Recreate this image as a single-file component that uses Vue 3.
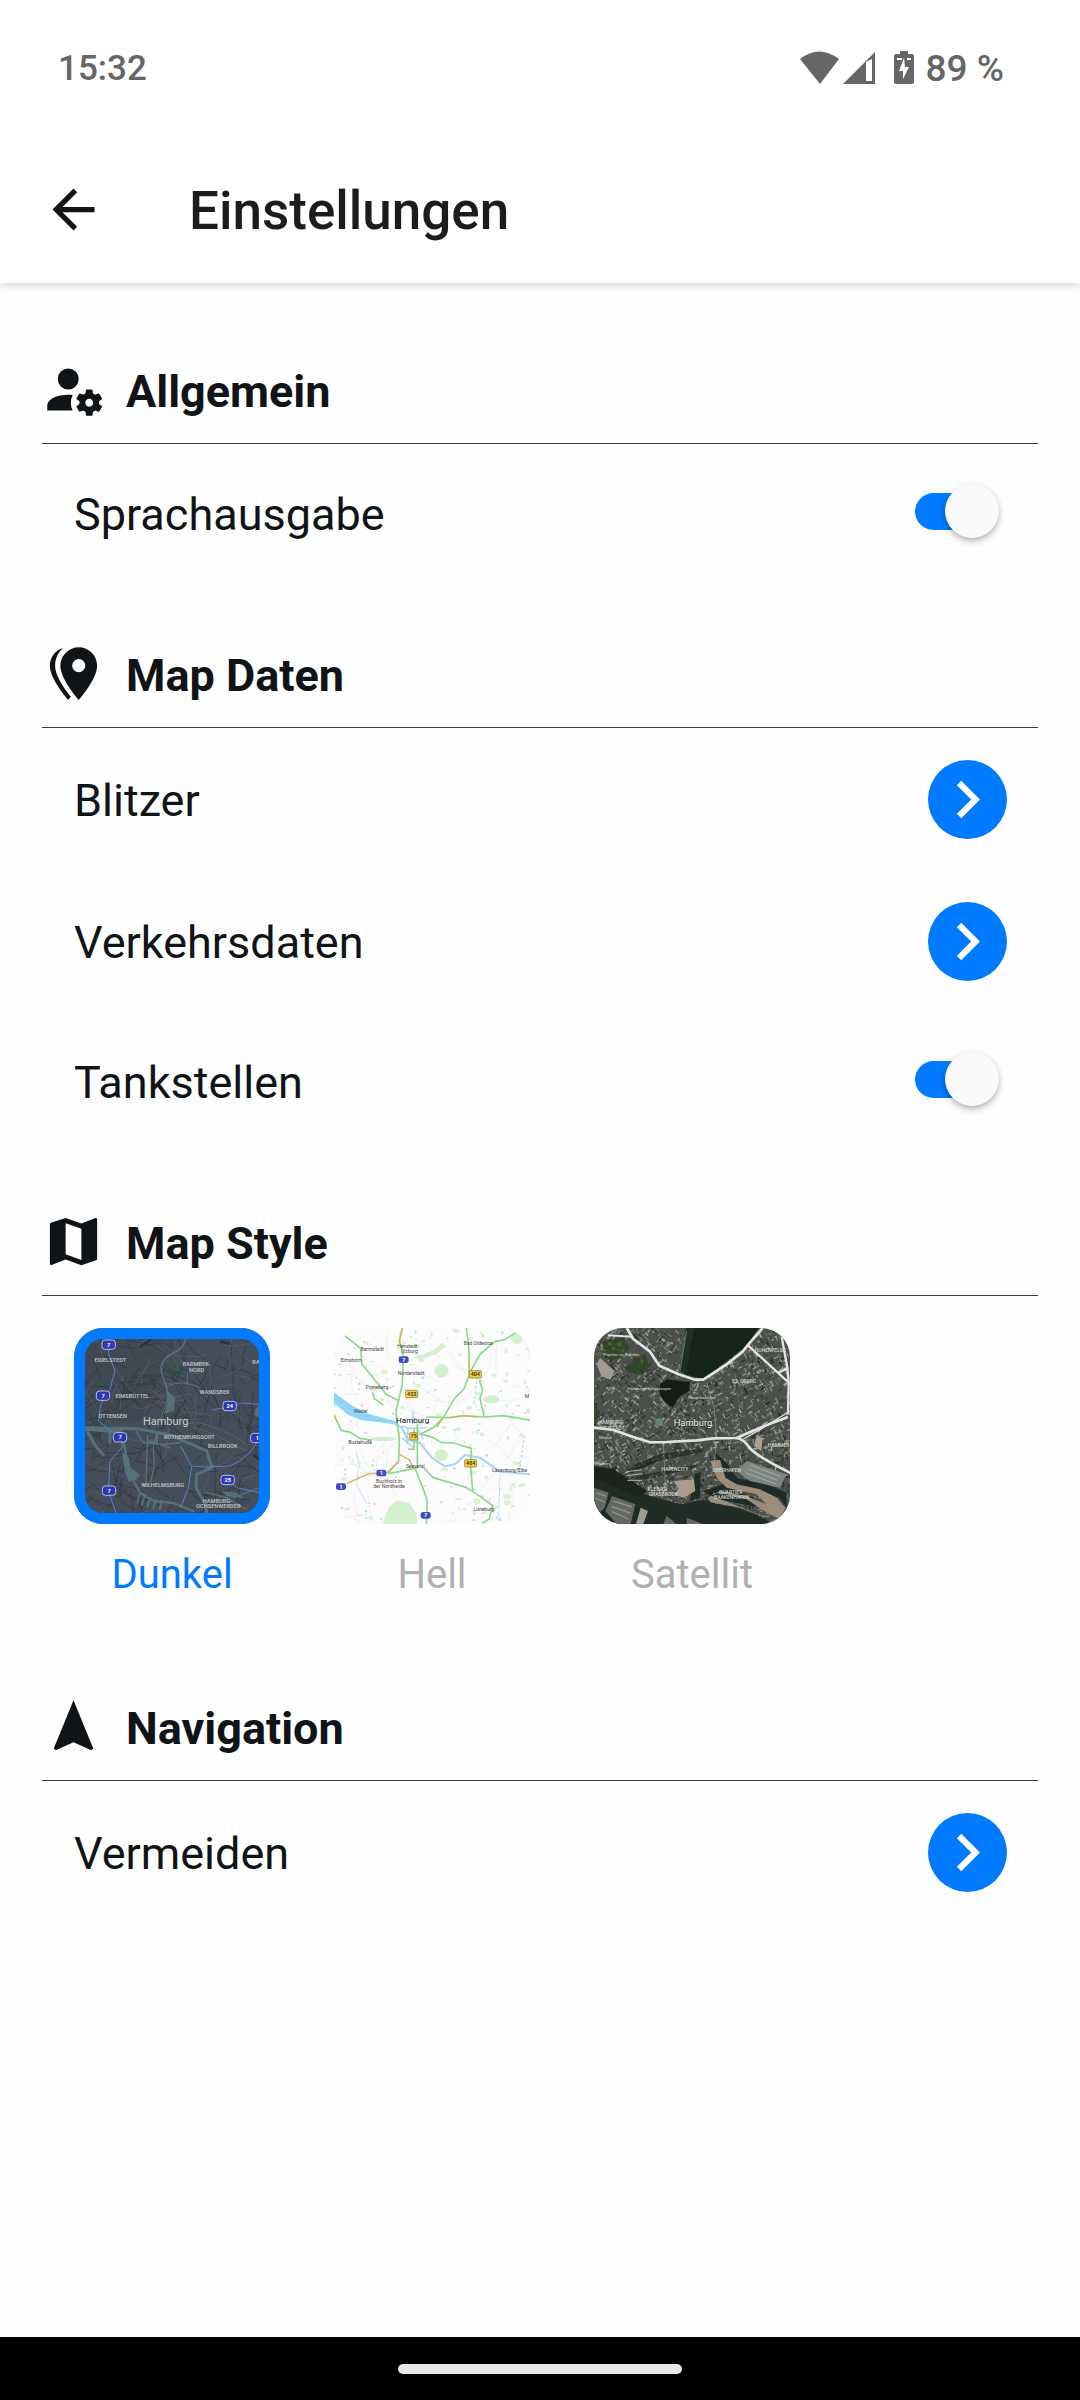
<script setup>
import { ref } from 'vue'

const voice = ref(true)
const fuel = ref(true)
const mapStyle = ref('dark')

const icons = {
  general:
    'M10 4A4 4 0 0 0 6 8A4 4 0 0 0 10 12A4 4 0 0 0 14 8A4 4 0 0 0 10 4M17 12C16.87 12 16.76 12.09 16.74 12.21L16.55 13.53C16.25 13.66 15.96 13.82 15.7 14L14.46 13.5C14.35 13.5 14.22 13.5 14.15 13.63L13.15 15.36C13.09 15.47 13.11 15.6 13.21 15.68L14.27 16.5C14.25 16.67 14.24 16.83 14.24 17C14.24 17.17 14.25 17.33 14.27 17.5L13.21 18.32C13.12 18.4 13.09 18.53 13.15 18.64L14.15 20.37C14.21 20.5 14.34 20.5 14.46 20.5L15.7 20C15.96 20.18 16.24 20.35 16.55 20.47L16.74 21.79C16.76 21.91 16.86 22 17 22H19C19.11 22 19.22 21.91 19.24 21.79L19.43 20.47C19.73 20.34 20 20.18 20.27 20L21.5 20.5C21.63 20.5 21.76 20.5 21.83 20.37L22.83 18.64C22.89 18.53 22.86 18.4 22.77 18.32L21.7 17.5C21.72 17.33 21.74 17.17 21.74 17C21.74 16.83 21.73 16.67 21.7 16.5L22.76 15.68C22.85 15.6 22.88 15.47 22.82 15.36L21.82 13.63C21.76 13.5 21.63 13.5 21.5 13.5L20.27 14C20 13.82 19.73 13.65 19.42 13.53L19.23 12.21C19.22 12.09 19.11 12 19 12H17M10 14C5.58 14 2 15.79 2 18V20H11.68A7 7 0 0 1 11 17A7 7 0 0 1 11.64 14.09C11.11 14.03 10.56 14 10 14M18 15.5C18.83 15.5 19.5 16.17 19.5 17C19.5 17.83 18.83 18.5 18 18.5C17.16 18.5 16.5 17.83 16.5 17C16.5 16.17 17.17 15.5 18 15.5Z',
  data: 'M14,11.5A2.5,2.5 0 0,0 16.5,9A2.5,2.5 0 0,0 14,6.5A2.5,2.5 0 0,0 11.5,9A2.5,2.5 0 0,0 14,11.5M14,2C17.86,2 21,5.13 21,9C21,14.25 14,22 14,22C14,22 7,14.25 7,9A7,7 0 0,1 14,2M5,9C5,13.5 10.08,19.66 11,20.81L10,22C10,22 3,14.25 3,9C3,5.83 5.11,3.15 8,2.29C6.16,3.94 5,6.33 5,9Z',
  style:
    'M15,19L9,16.89V5L15,7.11M20.5,3C20.44,3 20.39,3 20.34,3L15,5.1L9,3L3.36,4.9C3.15,4.97 3,5.15 3,5.38V20.5A0.5,0.5 0 0,0 3.5,21C3.55,21 3.61,21 3.66,20.97L9,18.9L15,21L20.64,19.1C20.85,19 21,18.85 21,18.62V3.5A0.5,0.5 0 0,0 20.5,3Z',
  navigation: 'M12,2L4.5,20.29L5.21,21L12,18L18.79,21L19.5,20.29L12,2Z',
}
const chevron = 'M8.59,16.58L13.17,12L8.59,7.41L10,6L16,12L10,18L8.59,16.58Z'

// Repeatable random numbers, so the map texture is the same on every load
function generator(seed) {
  let s = seed
  return () => {
    s = (s * 16807) % 2147483647
    return s / 2147483647
  }
}

// Short broken lines that stand for side streets
function streets(seed, count) {
  const rnd = generator(seed)
  let d = ''
  for (let i = 0; i < count; i++) {
    let x = 42 + rnd() * 588
    let y = 51 + rnd() * 588
    let a = rnd() * Math.PI
    d += `M${x.toFixed(0)} ${y.toFixed(0)}`
    for (let j = 0; j < 4; j++) {
      a += (rnd() - 0.5) * 0.8
      x += Math.cos(a) * 24
      y += Math.sin(a) * 24
      d += `L${x.toFixed(0)} ${y.toFixed(0)}`
    }
  }
  return d
}

function blobs(seed, count, size) {
  const rnd = generator(seed)
  return Array.from({ length: count }, () => ({
    x: Math.round(42 + rnd() * 588),
    y: Math.round(51 + rnd() * 588),
    rx: Math.round(2 + rnd() * size),
    ry: Math.round(2 + rnd() * size * 0.7),
  }))
}

// Rows of roofs, turned with the street grid of their quarter
function roofs(seed, count) {
  const rnd = generator(seed)
  const tones = ['#8b8d88', '#7a7d76', '#a8a9a3', '#262d29', '#30362f', '#656a63', '#8d8f88']
  return Array.from({ length: count }, () => {
    const x = Math.round(42 + rnd() * 588)
    const y = Math.round(51 + rnd() * 588)
    const turn = (x > 380 ? -28 : -48) + (y > 380 ? 20 : 0) + (rnd() > 0.5 ? 90 : 0)
    return {
      x,
      y,
      w: Math.round(4 + rnd() * 13),
      h: Math.round(2 + rnd() * 3),
      turn,
      fill: tones[Math.floor(rnd() * tones.length)],
    }
  })
}

const darkStreets = streets(11, 190)
const darkLanes = streets(29, 50)
const lightLanes = streets(53, 60)
const lightWoods = blobs(7, 90, 9)
const lightTowns = blobs(17, 60, 4)
const lightPonds = blobs(41, 55, 3)
const cityRoofs = roofs(91, 2600)

const darkShields = [
  { x: 146, y: 101, n: '7' },
  { x: 129, y: 254, n: '7' },
  { x: 180, y: 379, n: '7' },
  { x: 147, y: 539, n: '7' },
  { x: 509, y: 285, n: '24' },
  { x: 592, y: 381, n: '1' },
  { x: 503, y: 507, n: '25' },
]
const darkNames = [
  { x: 151, y: 154, t: 'EIDELSTEDT' },
  { x: 410, y: 165, t: 'BARMBEK-' },
  { x: 410, y: 183, t: 'NORD' },
  { x: 588, y: 158, t: 'RA' },
  { x: 464, y: 250, t: 'WANDSBEK' },
  { x: 217, y: 262, t: 'EIMSBÜTTEL' },
  { x: 158, y: 320, t: 'OTTENSEN' },
  { x: 388, y: 384, t: 'ROTHENBURGSORT' },
  { x: 488, y: 410, t: 'BILLBROOK' },
  { x: 308, y: 527, t: 'WILHELMSBURG' },
  { x: 472, y: 575, t: 'HAMBURG-' },
  { x: 475, y: 592, t: 'OCHSENWERDER' },
]
const lightShields = [
  { x: 251, y: 146, n: '7' },
  { x: 184, y: 486, n: '1' },
  { x: 63, y: 527, n: '1' },
  { x: 317, y: 613, n: '7' },
]
const lightPlates = [
  { x: 466, y: 190, n: '404' },
  { x: 275, y: 249, n: '433' },
  { x: 281, y: 376, n: '75' },
  { x: 452, y: 457, n: '404' },
]
const lightNames = [
  { x: 157, y: 121, t: 'Barmstedt' },
  { x: 264, y: 110, t: 'Henstedt-' },
  { x: 268, y: 125, t: 'Ulzburg' },
  { x: 475, y: 103, t: 'Bad Oldesloe' },
  { x: 93, y: 153, t: 'Elmshorn' },
  { x: 273, y: 192, t: 'Norderstedt' },
  { x: 171, y: 234, t: 'Pinneberg' },
  { x: 122, y: 305, t: 'Wedel' },
  { x: 120, y: 398, t: 'Buxtehude' },
  { x: 286, y: 470, t: 'Seevetal' },
  { x: 207, y: 516, t: 'Buchholz in' },
  { x: 207, y: 532, t: 'der Nordheide' },
  { x: 492, y: 599, t: 'Lüneburg' },
  { x: 569, y: 484, t: 'Lauenburg/Elbe' },
  { x: 621, y: 262, t: 'M' },
]
const satelliteNames = [
  { x: 571, y: 123, t: 'HOHENFELDE' },
  { x: 492, y: 215, t: 'ST. GEORG' },
  { x: 94, y: 339, t: 'HAMBURG-' },
  { x: 96, y: 356, t: 'NEUSTADT' },
  { x: 596, y: 407, t: 'HAMMER' },
  { x: 285, y: 481, t: 'HAFENCITY' },
  { x: 440, y: 483, t: 'OBERHAFEN' },
  { x: 232, y: 539, t: 'KLEINER' },
  { x: 250, y: 555, t: 'GRASBROOK' },
  { x: 452, y: 549, t: 'QUARTIER' },
  { x: 455, y: 564, t: 'BAAKENHAFEN' },
]
const satellitePlaces = [
  { x: 124, y: 134, t: 'Planten un Blomen' },
  { x: 208, y: 237, t: 'Hamburger Staatsoper' },
  { x: 366, y: 263, t: 'Hauptbahnhof' },
  { x: 76, y: 383, t: 'Michel' },
  { x: 66, y: 463, t: 'Hafen' },
]
</script>

<template>
  <div class="screen">
    <header class="top">
      <div class="status">
        <span>15:32</span>
        <div class="indicators">
          <svg class="signals" viewBox="0 0 116 36" aria-hidden="true">
            <path d="M0 9Q19 -6 39 9L20 34Z" />
            <path fill-rule="evenodd" d="M75 2V34H43ZM66 12V31H72V9Z" />
            <path
              fill-rule="evenodd"
              d="M100 1h8v3h4q2 0 2 2V32q0 2-2 2H96q-2 0-2-2V6q0-2 2-2h4ZM97 8v2h5V8ZM107 8v2h4V8ZM104 8L99 21H103V29L109 17H105Z"
            />
          </svg>
          <span class="level">89 %</span>
        </div>
      </div>
      <div class="appbar">
        <button class="back" type="button" aria-label="Zurück">
          <svg class="icon" viewBox="0 0 24 24" aria-hidden="true">
            <path d="M20 11H7.83L13.42 5.41L12 4L4 12L12 20L13.41 18.59L7.83 13H20Z" />
          </svg>
        </button>
        <h1>Einstellungen</h1>
      </div>
    </header>

    <main>
      <section>
        <h2>
          <svg class="icon" viewBox="0 0 24 24" aria-hidden="true"><path :d="icons.general" /></svg>
          Allgemein
        </h2>
        <div class="row row-switch">
          <label for="voice">Sprachausgabe</label>
          <input id="voice" v-model="voice" class="switch" type="checkbox" role="switch" />
        </div>
      </section>

      <section>
        <h2>
          <svg class="icon" viewBox="0 0 24 24" aria-hidden="true"><path :d="icons.data" /></svg>
          Map Daten
        </h2>
        <div v-for="name in ['Blitzer', 'Verkehrsdaten']" :key="name" class="row">
          <span>{{ name }}</span>
          <button class="open" type="button" :aria-label="name">
            <svg viewBox="0 0 24 24" aria-hidden="true"><path :d="chevron" /></svg>
          </button>
        </div>
        <div class="row row-switch">
          <label for="fuel">Tankstellen</label>
          <input id="fuel" v-model="fuel" class="switch" type="checkbox" role="switch" />
        </div>
      </section>

      <section>
        <h2>
          <svg class="icon" viewBox="0 0 24 24" aria-hidden="true"><path :d="icons.style" /></svg>
          Map Style
        </h2>
        <div class="styles">
          <label class="style">
            <input v-model="mapStyle" type="radio" name="map-style" value="dark" />
            <span class="thumb">
              <svg viewBox="42 51 588 588" aria-hidden="true">
                <rect x="42" y="51" width="588" height="588" fill="#444d5a" />
                <path d="M75 80H340L300 180L240 330H75Z" fill="#3f4853" />
                <ellipse cx="350" cy="178" rx="27" ry="14" fill="#2f4f47" />
                <ellipse cx="122" cy="220" rx="20" ry="12" fill="#34504a" />
                <path :d="darkStreets" fill="none" stroke="#2f3640" stroke-width="2" />
                <path :d="darkLanes" fill="none" stroke="#59636f" stroke-width="2" />
                <g fill="#56717a">
                  <path d="M318 235L345 262L342 300L312 308L322 280Z" />
                  <path d="M588 290L600 284V320L584 312Z" />
                  <path d="M72 345L180 350L190 360L160 366L90 360L72 362Z" />
                  <path d="M186 420L206 440L212 470L240 492L228 506L206 512L194 480Z" />
                  <path d="M484 540L530 546L550 562L500 556Z" />
                </g>
                <g fill="none" stroke="#56717a" stroke-linecap="round" stroke-linejoin="round">
                  <path d="M75 352H170L240 354L330 372L400 402L440 420L456 470L410 490L408 530L436 580L440 606" stroke-width="9" />
                  <path d="M84 365L110 410L130 430M150 362L150 395" stroke-width="9" />
                  <path d="M190 390L200 440L215 500L240 545L280 570L340 576L400 600" stroke-width="7" />
                  <path d="M230 362L250 395L310 400L360 395M290 362L285 395L330 410M262 370V392H292V370" stroke-width="5" />
                  <path d="M262 400L258 520M280 400L282 470L270 520" stroke-width="4" />
                  <path d="M240 545L232 575M255 552L246 580M270 560L262 586M288 566L280 592M304 570L300 594" stroke-width="6" />
                  <path d="M376 84C370 130 320 120 305 160C296 190 320 210 322 245" stroke-width="5" />
                  <path d="M320 270L300 330M382 186V220M320 225Q370 205 420 230" stroke-width="3" />
                  <path d="M384 338Q430 330 460 350Q500 358 560 400M400 350Q450 360 500 390L560 420" stroke-width="2" />
                  <path d="M440 545L500 560L560 596M520 560L598 530" stroke-width="4" />
                </g>
                <path d="M240 108L274 84M480 92L510 98M580 432L598 444" stroke="#2d343e" stroke-width="8" fill="none" />
                <g fill="none" stroke="#5f7fc4" stroke-width="3">
                  <path d="M146 84V130L165 180L150 235L122 280L116 330L150 358L184 380L186 410L150 450L145 540L168 606" />
                  <path d="M455 296L500 290L545 276L598 280" />
                  <path d="M598 380Q570 440 510 465L440 468L395 466L362 405M395 466L385 530L362 590" />
                  <path d="M500 500L530 530L598 545" />
                </g>
                <g v-for="(s, i) in darkShields" :key="i">
                  <rect :x="s.x - 20" :y="s.y - 14" width="40" height="28" rx="9" fill="#2c37b4" stroke="#b9c0dc" stroke-width="3" />
                  <text class="shield" :x="s.x" :y="s.y + 6">{{ s.n }}</text>
                </g>
                <g fill="#c3c9cf" class="caps">
                  <text v-for="n in darkNames" :key="n.t" :x="n.x" :y="n.y">{{ n.t }}</text>
                </g>
                <text class="city" x="317" y="341" fill="#c9ced4">Hamburg</text>
              </svg>
            </span>
            <span class="caption">Dunkel</span>
          </label>

          <label class="style">
            <input v-model="mapStyle" type="radio" name="map-style" value="light" />
            <span class="thumb">
              <svg viewBox="42 51 588 588" aria-hidden="true">
                <rect x="42" y="51" width="588" height="588" fill="#fcfcfc" />
                <path :d="lightLanes" fill="none" stroke="#ececf0" stroke-width="2" />
                <g fill="#d5f0cf">
                  <path d="M188 639L205 590L230 568L268 575L290 610L292 639Z" />
                  <ellipse cx="364" cy="180" rx="22" ry="20" />
                  <ellipse cx="514" cy="265" rx="24" ry="12" />
                  <ellipse cx="590" cy="84" rx="18" ry="16" />
                  <ellipse cx="190" cy="384" rx="38" ry="7" />
                  <ellipse cx="364" cy="432" rx="20" ry="18" />
                  <path d="M280 140L340 118L366 96L380 104L350 128L300 146Z" />
                </g>
                <g fill="#d9f2d3">
                  <ellipse v-for="(b, i) in lightWoods" :key="i" :cx="b.x" :cy="b.y" :rx="b.rx" :ry="b.ry" />
                </g>
                <g fill="#e6dccb">
                  <ellipse v-for="(b, i) in lightTowns" :key="i" :cx="b.x" :cy="b.y" :rx="b.rx" :ry="b.ry" />
                </g>
                <g fill="#b5e3f5">
                  <ellipse v-for="(b, i) in lightPonds" :key="i" :cx="b.x" :cy="b.y" :rx="b.rx" :ry="b.ry" />
                </g>
                <path d="M42 244L90 280L135 306L225 330L238 342L180 334L125 328L85 312L42 276Z" fill="#8fd5f6" />
                <g fill="none" stroke="#a9d4f7" stroke-linejoin="round">
                  <path d="M215 332L245 350L262 384L300 396L335 440L375 466L405 460L435 432L480 440L540 482L632 490" stroke-width="6" />
                  <path d="M245 345L270 352L320 350M250 365L290 372M246 380L280 410M264 350L262 400M280 300L278 340M290 350L310 385" stroke-width="4" />
                  <path d="M614 372L604 440L598 490M470 210L462 280L480 300M613 210L625 240" stroke-width="3" stroke-dasharray="9 6" />
                  <path d="M540 490L536 620M108 420L118 460L110 520L140 580" stroke-width="2" />
                </g>
                <g fill="none" stroke="#8bd98a" stroke-width="5" stroke-linejoin="round">
                  <path d="M75 75L122 112L126 160L182 228L198 250L234 268" />
                  <path d="M247 51L238 90L250 130L247 220L228 300L232 340L238 380L236 450L204 486" />
                  <path d="M158 244L162 262L190 282" />
                  <path d="M439 51L446 100L448 190L432 234L404 262L370 320L340 350L300 370" />
                  <path d="M588 64L555 86L524 92L480 130L452 180" />
                  <path d="M478 206L488 236L480 262L492 316" />
                  <path d="M320 318L390 320L430 314L492 318L550 314L632 328" />
                  <path d="M42 312L64 358L92 364L120 382L156 388" />
                  <path d="M300 368L340 380L362 394L400 396L454 412L452 470L458 540" />
                  <path d="M292 340L292 470L238 482L204 488" />
                  <path d="M286 474L312 540L322 570L319 639" />
                  <path d="M310 470L340 500L440 530L480 556L518 584L508 624L486 637" />
                  <path d="M282 352V415L264 414" />
                </g>
                <g fill="none" stroke="#d3b45c" stroke-width="4">
                  <path d="M247 51L238 90L244 106M388 320L430 314L470 318M448 150L448 190M42 312L52 334" />
                  <path d="M80 518L146 488L200 486L236 452M350 348L368 322M238 430L268 446L282 474" />
                </g>
                <g v-for="s in lightShields" :key="`${s.x}-${s.y}`">
                  <rect :x="s.x - 15" :y="s.y - 10" width="30" height="20" rx="7" fill="#3c4bc8" />
                  <text class="shield" :x="s.x" :y="s.y + 6">{{ s.n }}</text>
                </g>
                <g v-for="s in lightPlates" :key="`${s.x}-${s.y}`">
                  <rect :x="s.x - (s.n.length * 6)" :y="s.y - 11" :width="s.n.length * 12" height="22" rx="3" fill="#f2d44a" stroke="#80661c" stroke-width="2" />
                  <text class="plate" :x="s.x" :y="s.y + 6">{{ s.n }}</text>
                </g>
                <g fill="#44464c" class="town">
                  <text v-for="n in lightNames" :key="n.t" :x="n.x" :y="n.y">{{ n.t }}</text>
                </g>
                <text class="city city-small" x="278" y="336" fill="#15171a">Hamburg</text>
              </svg>
            </span>
            <span class="caption">Hell</span>
          </label>

          <label class="style">
            <input v-model="mapStyle" type="radio" name="map-style" value="satellite" />
            <span class="thumb">
              <svg viewBox="42 51 588 588" aria-hidden="true">
                <rect x="42" y="51" width="588" height="588" fill="#4b504a" />
                <g>
                  <rect
                    v-for="(r, i) in cityRoofs"
                    :key="i"
                    :x="r.x"
                    :y="r.y"
                    :width="r.w"
                    :height="r.h"
                    :fill="r.fill"
                    :transform="`rotate(${r.turn} ${r.x} ${r.y})`"
                  />
                </g>
                <g fill="#2b4322" opacity="0.8">
                  <path d="M70 90L130 80L150 110L130 135L90 150L68 120Z" />
                  <path d="M160 150L195 130L210 165L190 190L150 185L130 170Z" />
                  <path d="M42 270L60 300L48 340L42 340Z" />
                </g>
                <g fill="#42662b">
                  <circle cx="90" cy="98" r="6" /><circle cx="118" cy="100" r="7" /><circle cx="128" cy="120" r="5" />
                  <circle cx="100" cy="112" r="5" /><circle cx="186" cy="150" r="5" /><circle cx="76" cy="118" r="4" />
                </g>
                <path d="M60 140L104 180L92 206L64 196L50 160Z" fill="#a29c90" />
                <path d="M318 51H536L500 105L440 150L370 203L320 192L298 178L312 110Z" fill="#14241a" />
                <path d="M318 51H345L330 110L320 192L298 178L312 110Z" fill="#1e3120" />
                <path d="M240 218L262 205L330 214L328 240L300 256L278 290L250 270L238 246Z" fill="#151d18" />
                <path d="M240 258L268 296" stroke="#7f837d" stroke-width="4" />
                <circle cx="238" cy="334" r="12" fill="#66807a" />
                <g fill="#1f2c25">
                  <path d="M42 480L90 500L160 540L230 560L300 580L370 566L400 576L480 592L560 625L570 639H42Z" />
                  <path d="M345 490L362 482L360 560L330 570Z" />
                  <path d="M400 420L440 455L470 500L560 520L620 545V590L600 560L540 540L450 520L424 480Z" />
                  <path d="M370 540L430 520L520 560L560 590L500 582L400 562Z" />
                </g>
                <g fill="#646861">
                  <path d="M42 530L86 545L74 590L42 622Z" />
                  <path d="M96 555L166 580L152 639L110 639L76 600Z" />
                  <path d="M260 615L290 639H250ZM320 620L370 639H320Z" />
                </g>
                <path d="M100 570L156 588M94 586L150 606M96 602L146 624M50 545L78 556M46 562L76 574" stroke="#8f928b" stroke-width="4" />
                <path d="M182 590L204 600L190 639H168Z" fill="#a19c92" />
                <path d="M280 510L342 505L346 540L310 560L284 552L296 530Z" fill="#ab9d8e" />
                <g fill="#9c8d7b">
                  <path d="M390 450L420 446L436 500L470 520L540 535L590 560L616 590L600 625L560 605L500 565L440 550L400 545L396 555L560 620L480 590L392 574L384 560L420 540L500 556L560 580L530 550L440 530L410 500Z" />
                </g>
                <path d="M500 450L620 490L600 530L510 510L470 480Z" fill="#7d8583" />
                <path d="M512 462L600 496M505 474L592 508M498 486L590 520" stroke="#a6adac" stroke-width="3" />
                <path d="M530 372L548 382L544 420L522 406Z" fill="#aaa08f" />
                <g fill="#10160f" opacity="0.5">
                  <path d="M140 470L240 430L372 410L366 424L250 446L150 486Z" />
                  <path d="M150 500L250 480L345 462V472L250 492L160 512Z" />
                </g>
                <path d="M42 466L100 474L150 506L200 540L180 560L42 500Z" fill="#1a251e" />
                <g fill="none" stroke="#b3b5b0" stroke-width="3">
                  <path d="M320 60L300 180M380 215L402 290L410 380M250 395L256 520M410 390L400 470" opacity="0.5" />
                  <path d="M140 482L186 476M140 494L184 488M142 508L186 508" />
                </g>
                <g fill="none" stroke="#e4e4e2" stroke-linejoin="round">
                  <path d="M140 51L160 84L210 122L238 164L296 190L345 206H370L440 160L488 122L505 100L548 51" stroke-width="8" />
                  <path d="M84 73L156 77" stroke-width="6" />
                  <path d="M505 104L632 220M605 78L622 170L626 214L624 310M622 172L596 184" stroke-width="7" />
                  <path d="M42 350L100 357L160 378L210 394L260 393L350 388L400 382L470 381L540 350L624 318" stroke-width="8" />
                  <path d="M490 384L540 356L620 306" stroke-width="4" />
                  <path d="M470 381Q492 384 508 410Q530 436 632 486" stroke-width="8" />
                </g>
                <g fill="#d6d7d3" class="caps caps-small">
                  <text v-for="n in satelliteNames" :key="n.t" :x="n.x" :y="n.y">{{ n.t }}</text>
                </g>
                <g fill="#d6d7d3" class="place">
                  <text v-for="n in satellitePlaces" :key="n.t" :x="n.x" :y="n.y">{{ n.t }}</text>
                </g>
                <text class="city city-medium" x="339" y="346" fill="#ffffff" stroke="#20241f" stroke-width="3" paint-order="stroke">Hamburg</text>
              </svg>
            </span>
            <span class="caption">Satellit</span>
          </label>
        </div>
      </section>

      <section>
        <h2>
          <svg class="icon" viewBox="0 0 24 24" aria-hidden="true"><path :d="icons.navigation" /></svg>
          Navigation
        </h2>
        <div class="row">
          <span>Vermeiden</span>
          <button class="open" type="button" aria-label="Vermeiden">
            <svg viewBox="0 0 24 24" aria-hidden="true"><path :d="chevron" /></svg>
          </button>
        </div>
      </section>
    </main>

    <footer class="gesture"><span></span></footer>
  </div>
</template>

<style>
body {
  background: #fefefe;
}
</style>

<style scoped>
.screen {
  display: flex;
  flex-direction: column;
  min-height: 100vh;
  font-family: Roboto, 'Liberation Sans', sans-serif;
  color: #111417;
}
.screen * {
  box-sizing: border-box;
}
svg {
  display: block;
}
h1,
h2 {
  margin: 0;
}
button {
  padding: 0;
  border: 0;
  background: none;
  color: inherit;
}

.top {
  background: #fff;
  box-shadow: 0 1px 10px rgba(0, 0, 0, 0.22);
}
.status {
  display: flex;
  align-items: center;
  justify-content: space-between;
  height: 136px;
  padding: 0 76px 0 58px;
  color: #666;
  font-size: 35px;
  font-weight: 500;
}
.indicators {
  display: flex;
  align-items: center;
  gap: 10px;
}
.level {
  font-size: 37px;
}
.signals {
  width: 116px;
  height: 36px;
  fill: currentColor;
}
.appbar {
  display: flex;
  align-items: center;
  gap: 84px;
  height: 147px;
  padding: 0 42px;
}
.appbar h1 {
  padding-top: 3px;
  font-size: 53px;
  font-weight: 500;
  color: #1c1c1e;
}
.icon {
  flex: none;
  width: 63px;
  height: 63px;
  fill: currentColor;
}

main {
  flex: 1;
  padding: 14px 42px 0;
}
h2 {
  display: flex;
  align-items: flex-end;
  gap: 21px;
  height: 147px;
  padding-bottom: 22px;
  border-bottom: 1px solid #3a3d40;
  font-size: 45px;
  font-weight: 700;
  line-height: 58px;
}
.row {
  display: flex;
  align-items: center;
  justify-content: space-between;
  height: 142px;
  padding: 0 31px 0 32px;
  font-size: 45px;
}
.row > :first-child {
  padding-top: 3px;
}
.row-switch {
  height: 137px;
}

.open {
  display: grid;
  place-items: center;
  width: 79px;
  height: 79px;
  border-radius: 50%;
  background: #007aff;
}
.open svg {
  width: 75px;
  height: 75px;
  fill: #fff;
}

.switch {
  appearance: none;
  position: relative;
  width: 92px;
  height: 54px;
  margin: 0 0 3px;
}
.switch::before {
  content: '';
  position: absolute;
  inset: 9px 9px 8px 0;
  border-radius: 19px;
  background: #b5b5b8;
}
.switch:checked::before {
  background: #007aff;
}
.switch::after {
  content: '';
  position: absolute;
  top: 0;
  left: 0;
  width: 54px;
  height: 54px;
  border-radius: 50%;
  background: #fafafa;
  box-shadow: 0 3px 6px rgba(0, 0, 0, 0.3);
}
.switch:checked::after {
  left: 30px;
}

.styles {
  display: flex;
  gap: 64px;
  padding: 32px;
}
.style {
  display: flex;
  flex-direction: column;
  align-items: center;
  gap: 24px;
  height: 274px;
  color: #b0b0b0;
  font-size: 40px;
}
.style input {
  position: absolute;
  opacity: 0;
}
.thumb {
  display: block;
  position: relative;
  width: 196px;
  height: 196px;
  border-radius: 29px;
  overflow: hidden;
}
.thumb svg {
  width: 196px;
  height: 196px;
}
.style input:checked + .thumb::after {
  content: '';
  position: absolute;
  inset: 0;
  border: 11px solid #007aff;
  border-radius: 29px;
}
.style input:checked ~ .caption {
  color: #007aff;
}
.caption {
  line-height: 54px;
}

.thumb text {
  text-anchor: middle;
}
.caps {
  font-size: 17px;
  font-weight: 500;
}
.caps-small {
  font-size: 15px;
}
.place {
  font-size: 13px;
}
.town {
  font-size: 15px;
}
.city {
  font-size: 33px;
}
.city-medium {
  font-size: 28px;
}
.city-small {
  font-size: 24px;
}
.shield {
  font-size: 17px;
  font-weight: 700;
  fill: #fff;
}
.plate {
  font-size: 16px;
  font-weight: 700;
  fill: #4a3a08;
}

.gesture {
  display: grid;
  place-items: center;
  height: 63px;
  background: #000;
}
.gesture span {
  width: 284px;
  height: 10px;
  border-radius: 5px;
  background: #e9e9e9;
}
</style>
